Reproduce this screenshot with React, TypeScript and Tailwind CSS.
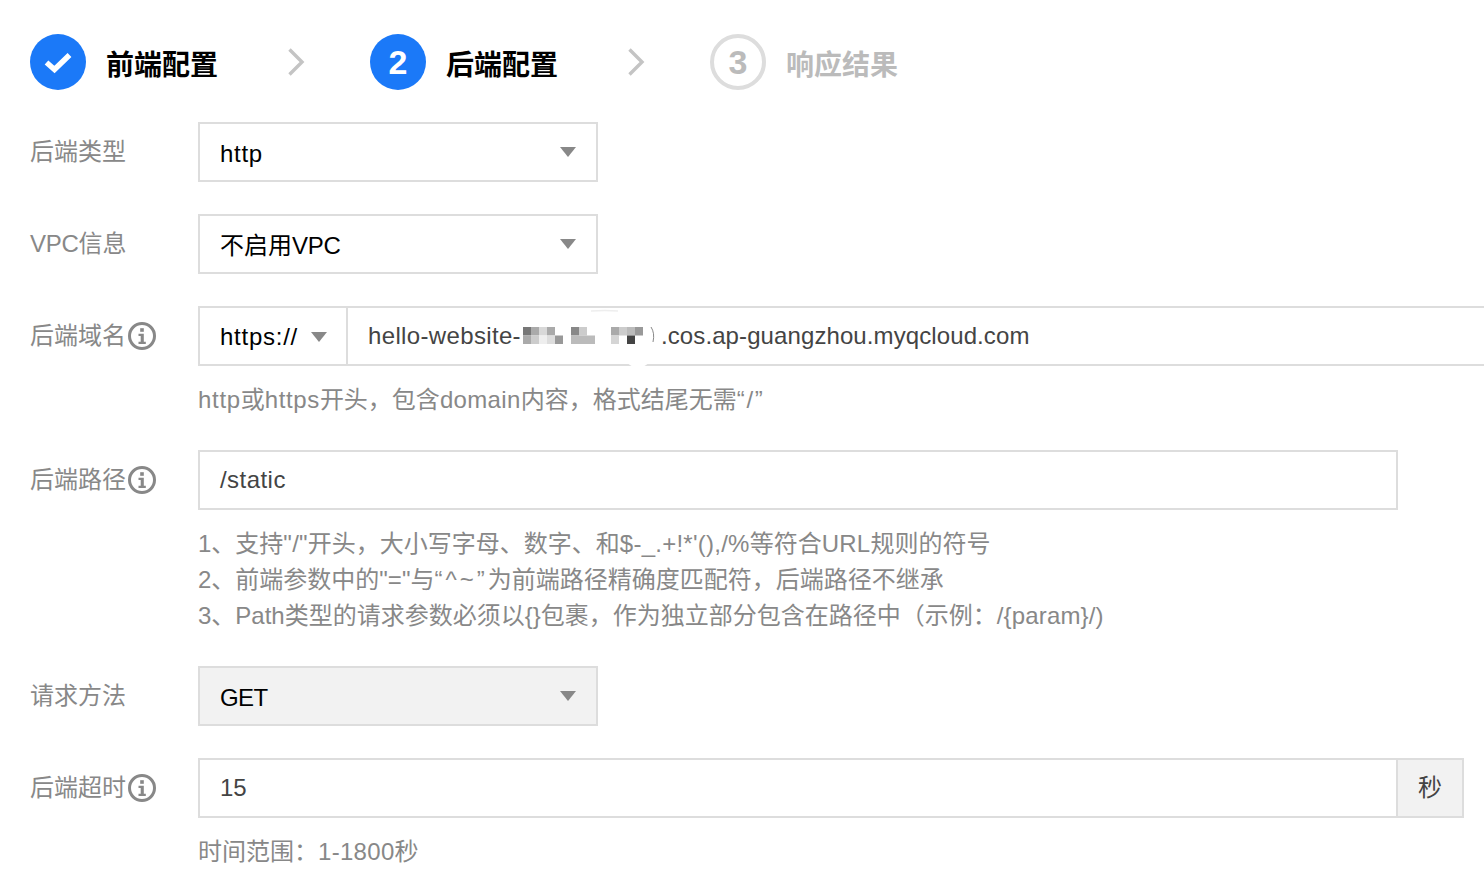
import React from "react";

const font = { fontFamily: '"Liberation Sans", "Noto Sans CJK SC", sans-serif' };

function Info() {
  return (
    <svg width="28" height="28" viewBox="0 0 28 28" className="ml-[2px] shrink-0">
      <circle cx="14" cy="14" r="12.5" fill="none" stroke="#888" strokeWidth="3" />
      <rect x="12.2" y="6.2" width="3.6" height="3.6" fill="#888" />
      <path d="M10.5 11.8h5.3v8h2v2.2h-7.3v-2.2h2.2v-5.8h-2.2z" fill="#888" />
    </svg>
  );
}

function Caret({ className = "" }: { className?: string }) {
  return (
    <svg width="16" height="10" viewBox="0 0 16 10" className={className}>
      <path d="M0 0h16L8 10z" fill="#888" />
    </svg>
  );
}

function Chevron() {
  return (
    <svg width="18" height="30" viewBox="0 0 18 30" className="shrink-0">
      <path d="M1.5 2.5L14 15L1.5 27.5" fill="none" stroke="#c4c4c4" strokeWidth="3.4" />
    </svg>
  );
}

function Label({ children, info }: { children: React.ReactNode; info?: boolean }) {
  return (
    <div className="w-[168px] shrink-0 h-[60px] flex items-center text-[24px] text-[#888]">
      <span>{children}</span>
      {info && <Info />}
    </div>
  );
}

function Select({ children, disabled }: { children: React.ReactNode; disabled?: boolean }) {
  return (
    <div
      className={`w-[400px] h-[60px] border-2 border-[#ddd] flex items-center justify-between pl-[20px] pr-[20px] pt-[4px] text-[24px] text-[#000] ${
        disabled ? "bg-[#f2f2f2]" : "bg-white"
      }`}
    >
      <span>{children}</span>
      <Caret className="-mt-[4px]" />
    </div>
  );
}

const mosaic: [number, number, string][] = [
  [0, 0, "#777"], [1, 0, "#aaa"], [2, 0, "#d8d8d8"], [3, 0, "#aaa"],
  [0, 1, "#aaa"], [1, 1, "#ccc"], [2, 1, "#eee"], [3, 1, "#ddd"], [4, 1, "#999"],
  [6, 0, "#888"], [7, 0, "#ccc"], [6, 1, "#bbb"], [7, 1, "#bbb"], [8, 1, "#bbb"],
  [11, 0, "#aaa"], [12, 0, "#ccc"], [13, 0, "#bbb"], [14, 0, "#999"],
  [11, 1, "#d5d5d5"], [13, 1, "#444"],
];

function Mosaic() {
  return (
    <svg width="140" height="56" viewBox="0 0 140 56" className="shrink-0 overflow-visible">
      {mosaic.map(([x, y, c], i) => (
        <rect key={i} x={x * 8 + 2} y={y * 8.5 + 19} width="8" height="8.5" fill={c} />
      ))}
      <path d="M130 19q4 6 2 15" fill="none" stroke="#888" strokeWidth="1" />
      <path d="M70 3q14 -1 27 0" fill="none" stroke="#eee" strokeWidth="1.5" />
      <path d="M106 55h22l-6 4h-10z" fill="#fff" />
    </svg>
  );
}

function Step({ mark, text, state }: { mark: React.ReactNode; text: string; state: "active" | "todo" }) {
  return (
    <div className="flex items-center shrink-0">
      <div
        className={`w-[56px] h-[56px] rounded-full flex items-center justify-center text-[34px] font-bold ${
          state === "active" ? "bg-[#1b79f8] text-white" : "border-[4px] border-[#ddd] text-[#bbb]"
        }`}
      >
        {mark}
      </div>
      <span className={`ml-[20px] text-[28px] font-bold mt-[8px] ${state === "active" ? "text-black" : "text-[#bbb]"}`}>
        {text}
      </span>
    </div>
  );
}

function Hint({ children }: { children: React.ReactNode }) {
  return <div className="text-[24px] leading-[36px] text-[#888]">{children}</div>;
}

export default function App() {
  return (
    <div className="w-[1484px] h-[874px] overflow-hidden bg-white pl-[30px] pt-[34px]" style={font}>
      <div className="flex items-center h-[56px]">
        <Step
          state="active"
          text="前端配置"
          mark={
            <svg width="30" height="24" viewBox="0 0 30 24">
              <path d="M3.5 12.5l8 7L26.5 5" fill="none" stroke="#fff" strokeWidth="5.5" />
            </svg>
          }
        />
        <div className="ml-[70px] mr-[64px]"><Chevron /></div>
        <Step state="active" text="后端配置" mark="2" />
        <div className="ml-[70px] mr-[64px]"><Chevron /></div>
        <Step state="todo" text="响应结果" mark="3" />
      </div>

      <div className="flex mt-[32px]">
        <Label>后端类型</Label>
        <Select><span className="tracking-[0.7px]">http</span></Select>
      </div>

      <div className="flex mt-[32px]">
        <Label><span className="tracking-[-0.3px]">VPC</span>信息</Label>
        <Select>不启用<span className="tracking-[-0.3px]">VPC</span></Select>
      </div>

      <div className="flex mt-[32px]">
        <Label info>后端域名</Label>
        <div className="flex-1 min-w-0">
          <div className="h-[60px] flex border-y-2 border-l-2 border-[#ddd] text-[24px]">
            <div className="w-[148px] shrink-0 flex items-center pl-[20px] pt-[2px] border-r-2 border-[#ddd] text-black">
              <span className="tracking-[0.75px]">https://</span>
              <Caret className="ml-[13px]" />
            </div>
            <div className="flex-1 flex items-center pl-[20px] text-[#444] whitespace-nowrap">
              <span className="tracking-[0.35px]">hello-website-</span>
              <Mosaic />
              <span className="tracking-[0.1px]">.cos.ap-guangzhou.myqcloud.com</span>
            </div>
          </div>
          <div className="mt-[16px]">
            <Hint>
              <span className="tracking-[0.7px]">http</span>或<span className="tracking-[0.6px]">https</span>开头，包含<span className="tracking-[0.35px]">domain</span>内容，格式结尾无需<span className="tracking-[1.7px]">“/”</span>
            </Hint>
          </div>
        </div>
      </div>

      <div className="flex mt-[32px]">
        <Label info>后端路径</Label>
        <div>
          <div className="w-[1200px] h-[60px] border-2 border-[#ddd] flex items-center pl-[20px] text-[24px] text-[#444]">
            <span className="tracking-[0.45px]">/static</span>
          </div>
          <div className="mt-[16px]">
            <Hint>
              1、支持<span className="tracking-[0.25px]">"/"</span>开头，大小写字母、数字、和<span className="tracking-[0.25px]">$-_.+!*'(),/%</span>等符合<span className="tracking-[0.25px]">URL</span>规则的符号
            </Hint>
            <Hint>
              2、前端参数中的"="与<span className="tracking-[3px]">“^~”</span>为前端路径精确度匹配符，后端路径不继承
            </Hint>
            <Hint>
              3、Path类型的请求参数必须以{"{}"}包裹，作为独立部分包含在路径中（示例：<span className="tracking-[0.15px]">/{"{param}"}/)</span>
            </Hint>
          </div>
        </div>
      </div>

      <div className="flex mt-[32px]">
        <Label>请求方法</Label>
        <Select disabled><span className="tracking-[-0.6px]">GET</span></Select>
      </div>

      <div className="flex mt-[32px]">
        <Label info>后端超时</Label>
        <div>
          <div className="w-[1266px] h-[60px] border-2 border-[#ddd] flex text-[24px] text-[#444]">
            <div className="flex-1 flex items-center pl-[20px]">15</div>
            <div className="w-[66px] shrink-0 bg-[#f2f2f2] border-l-2 border-[#ddd] flex items-center justify-center">秒</div>
          </div>
          <div className="mt-[16px]">
            <Hint>时间范围：<span className="tracking-[0.3px]">1-1800</span>秒</Hint>
          </div>
        </div>
      </div>
    </div>
  );
}
